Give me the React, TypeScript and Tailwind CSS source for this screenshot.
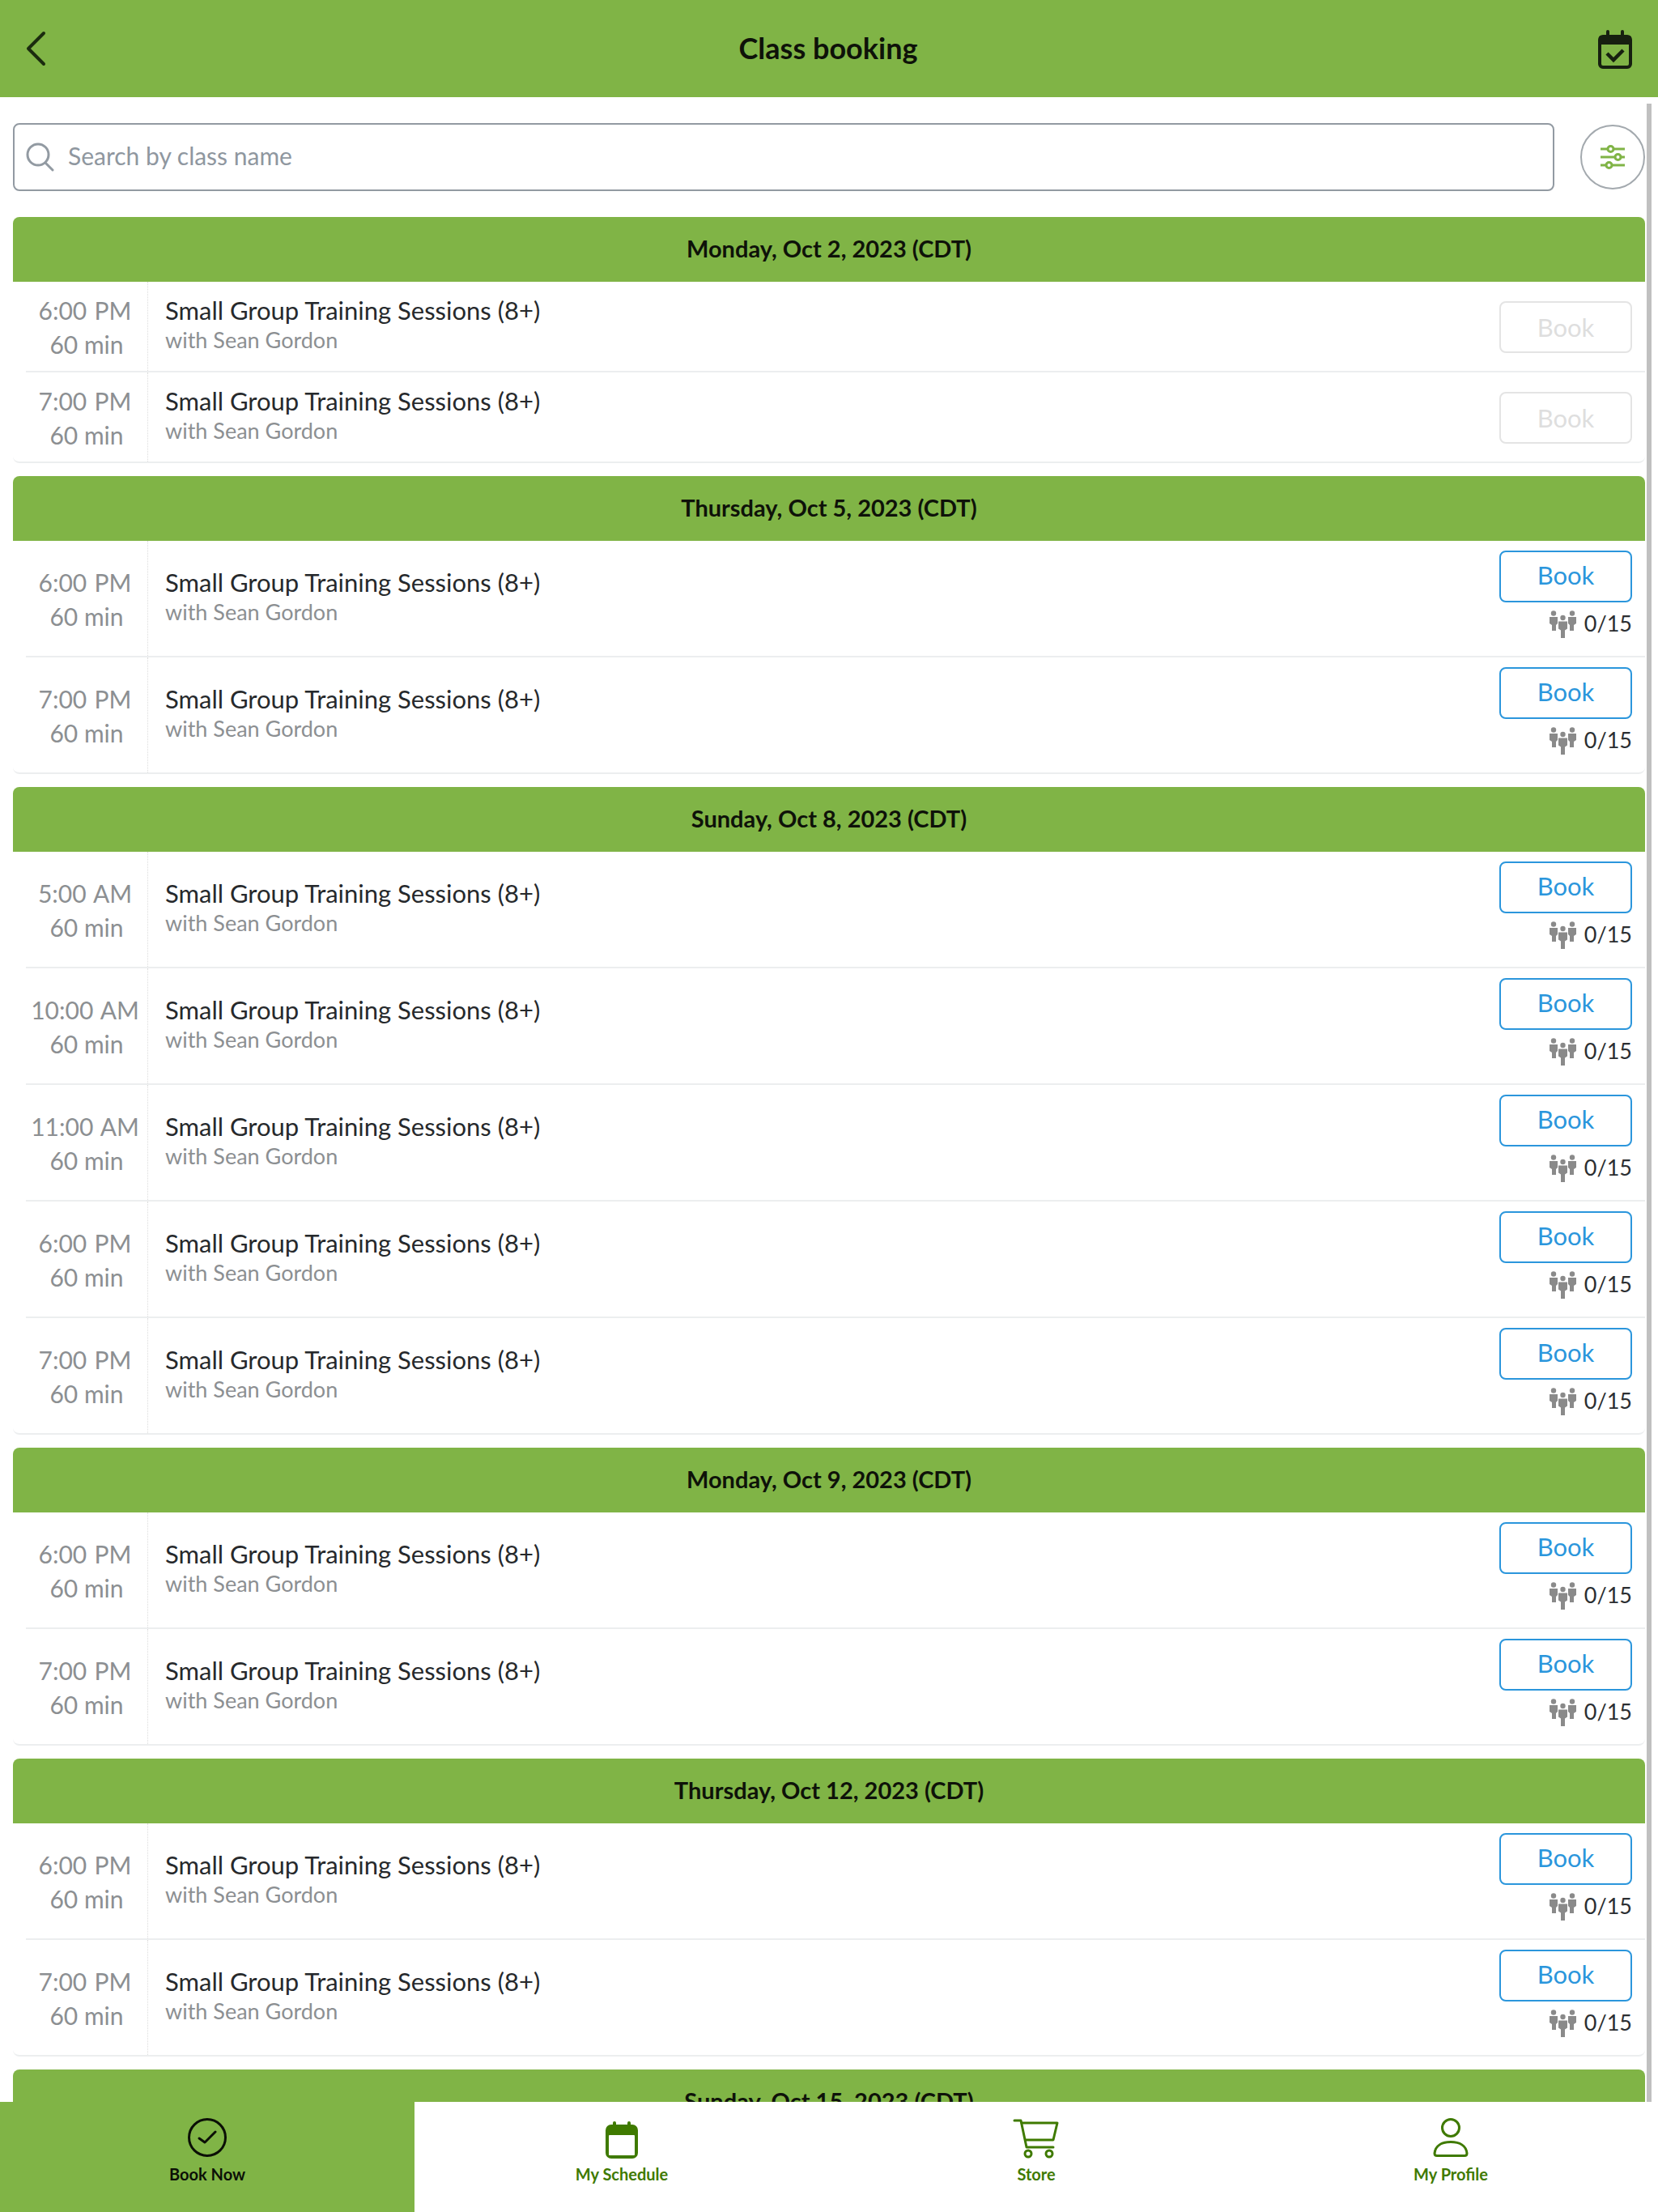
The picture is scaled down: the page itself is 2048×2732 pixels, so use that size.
const sections = [
  { date: "Monday, Oct 2, 2023 (CDT)", disabled: true, times: ["6:00  PM", "7:00  PM"] },
  { date: "Thursday, Oct 5, 2023 (CDT)", times: ["6:00  PM", "7:00  PM"] },
  { date: "Sunday, Oct 8, 2023 (CDT)", times: ["5:00  AM", "10:00  AM", "11:00  AM", "6:00  PM", "7:00  PM"] },
  { date: "Monday, Oct 9, 2023 (CDT)", times: ["6:00  PM", "7:00  PM"] },
  { date: "Thursday, Oct 12, 2023 (CDT)", times: ["6:00  PM", "7:00  PM"] },
  { date: "Sunday, Oct 15, 2023 (CDT)", times: [] },
];

function PeopleIcon() {
  return (
    <svg width="33" height="34" viewBox="0 0 33 34" fill="#8a8a8a">
      <circle cx="5" cy="3.5" r="3.2" />
      <circle cx="28" cy="3.5" r="3.2" />
      <circle cx="16.5" cy="9" r="3.2" />
      <path d="M0 8h10v8l-2 2v7H3v-7l-3-2z" />
      <path d="M23 8h10v8l-3 2v7h-5v-7l-2-2z" />
      <path d="M11 13.5h11v9l-3 2V34h-5v-9.5l-3-2z" />
    </svg>
  );
}

function ClassRow({ time, last, disabled }: { time: string; last: boolean; disabled?: boolean }) {
  return (
    <div
      className={`flex items-stretch border-b-2 border-[#eceeef] ${disabled ? "h-[112px]" : "h-[144px]"} ${
        last ? "rounded-b-lg" : "ml-4"
      }`}
    >
      <div
        className={`flex shrink-0 flex-col items-center border-r border-dotted border-[#dcdcdc] text-[#8c8f92] ${
          last ? "w-[167px] pl-4" : "w-[151px]"
        } ${disabled ? "pt-[14px]" : "pt-[30px]"}`}
      >
        <span className="whitespace-pre pr-1 text-[30px] leading-[42px] [word-spacing:-3px]">{time}</span>
        <span className="text-[30px] leading-[42px]">60 min</span>
      </div>
      <div className={`flex-1 pl-[21px] ${disabled ? "pt-[16px]" : "pt-[32px]"}`}>
        <p className="text-[31px] leading-[38px] text-[#26292c]">Small Group Training Sessions (8+)</p>
        <p className="text-[27px] leading-[36px] text-[#8c8f92]">with Sean Gordon</p>
      </div>
      <div className={`mr-4 flex w-[164px] shrink-0 flex-col items-end ${disabled ? "pt-6" : "pt-3"}`}>
        <button
          className={`h-16 w-[164px] rounded-lg border-2 bg-white text-[31px] ${
            disabled ? "border-[#e4e4e4] text-[#dedede]" : "border-[#2b96dc] pb-[3px] text-[#2b96dc]"
          }`}
        >
          Book
        </button>
        {!disabled && (
          <div className="mt-[9px] flex items-center gap-[10px]">
            <PeopleIcon />
            <span className="pb-px text-[27px] leading-[34px] text-[#2b2e31]">0/15</span>
          </div>
        )}
      </div>
    </div>
  );
}

const navItems = [
  {
    label: "Book Now",
    icon: (
      <svg width="48" height="48" viewBox="0 0 48 48" fill="none" stroke="#0b0f06" strokeWidth="3">
        <circle cx="24" cy="24" r="22.5" />
        <path d="M14 25l7 5 13-13" strokeLinecap="round" strokeLinejoin="round" />
      </svg>
    ),
  },
  {
    label: "My Schedule",
    icon: (
      <svg width="40" height="50" viewBox="0 0 40 50" fill="none">
        <path d="M11 6v6M29 6v6" stroke="#3f7a00" strokeWidth="4" strokeLinecap="round" />
        <rect x="0" y="8" width="40" height="42" rx="7" fill="#3f7a00" />
        <rect x="4" y="21" width="32" height="25" rx="1" fill="#fff" />
      </svg>
    ),
  },
  {
    label: "Store",
    icon: (
      <svg width="58" height="50" viewBox="0 0 58 50" fill="none" stroke="#3f7a00" strokeWidth="3">
        <path d="M2 3h8l7 33h33" strokeLinecap="round" strokeLinejoin="round" />
        <path d="M11 6h44l-5 21H16" strokeLinecap="round" strokeLinejoin="round" />
        <circle cx="19" cy="44" r="4" />
        <circle cx="45" cy="44" r="4" />
      </svg>
    ),
  },
  {
    label: "My Profile",
    icon: (
      <svg width="44" height="48" viewBox="0 0 44 48" fill="none" stroke="#3f7a00" strokeWidth="3">
        <circle cx="22" cy="12" r="10.5" />
        <path d="M5 46.5c-2 0-3-1-3-3C3 34 11 29.500 22 29.500S41 34 42 43.500c0 2-1 3-3 3z" strokeLinejoin="round" />
      </svg>
    ),
  },
];

export default function App() {
  return (
    <div className="relative flex h-[2732px] flex-col overflow-hidden bg-white font-['Lato',sans-serif]">
      <header className="grid h-[120px] shrink-0 grid-cols-[1fr_auto_1fr] items-center bg-[#80b446] pl-[30px] pr-8">
        <svg width="28" height="44" viewBox="0 0 28 44" fill="none" stroke="#1b2c0f" strokeWidth="4" strokeLinecap="round" strokeLinejoin="round">
          <path d="M24 3L5 22l19 19" />
        </svg>
        <h1 className="pb-[2px] text-[36px] font-bold text-[#0e1209]">Class booking</h1>
        <svg className="justify-self-end" width="42" height="49" viewBox="0 0 42 49" fill="none">
          <path d="M12 3v6M30 3v6" stroke="#172010" strokeWidth="4" strokeLinecap="round" />
          <rect x="2" y="9" width="38" height="38" rx="4" stroke="#172010" strokeWidth="4" />
          <rect x="1" y="8" width="40" height="11" rx="3" fill="#172010" />
          <path d="M11 30l8 8 12-12" stroke="#172010" strokeWidth="4.5" />
        </svg>
      </header>

      <main className="flex-1 overflow-hidden px-4 pt-8">
        <div className="flex items-center justify-between">
          <div className="flex h-[84px] w-[1904px] items-center gap-4 rounded-lg border-2 border-[#929aa2] pl-[14px]">
            <svg width="36" height="36" viewBox="0 0 36 36" fill="none" stroke="#929aa2" strokeWidth="3">
              <circle cx="15" cy="15" r="13" />
              <path d="M24 25l9 9" strokeLinecap="round" />
            </svg>
            <span className="pb-[3px] text-[30px] text-[#8f979f]">Search by class name</span>
          </div>
          <div className="flex h-20 w-20 items-center justify-center rounded-full border-2 border-[#a3a9ae]">
            <svg width="32" height="30" viewBox="0 0 32 30" fill="none" stroke="#80b446" strokeWidth="3">
              <path d="M1 5h9M17 5h14M1 15h18M26 15h5M1 25h7M15 25h16" />
              <circle cx="13.5" cy="5" r="3.5" />
              <circle cx="22.5" cy="15" r="3.5" />
              <circle cx="11.5" cy="25" r="3.5" />
            </svg>
          </div>
        </div>

        <div className="mt-8 flex flex-col gap-4">
          {sections.map((section) => (
            <section key={section.date}>
              <div className="flex h-20 items-center justify-center rounded-t-lg bg-[#80b446] pb-[2px] text-[29px] font-bold text-[#0e1209]">
                {section.date}
              </div>
              {section.times.map((time, i) => (
                <ClassRow
                  key={time}
                  time={time}
                  disabled={section.disabled}
                  last={i === section.times.length - 1}
                />
              ))}
            </section>
          ))}
        </div>
      </main>

      <nav className="grid h-[136px] shrink-0 grid-cols-4 bg-white">
        {navItems.map((item, i) => (
          <div
            key={item.label}
            className={`flex flex-col items-center pt-5 ${i === 0 ? "bg-[#80b446] text-[#0b0f06]" : "text-[#3f7a00]"}`}
          >
            <div className="flex h-[52px] items-start">{item.icon}</div>
            <span className="mt-[3px] text-[20px] font-bold leading-[28px]">{item.label}</span>
          </div>
        ))}
      </nav>

      <div className="absolute right-2 top-[128px] h-[2468px] w-[6px] bg-[#c0c0c0]" />
    </div>
  );
}
